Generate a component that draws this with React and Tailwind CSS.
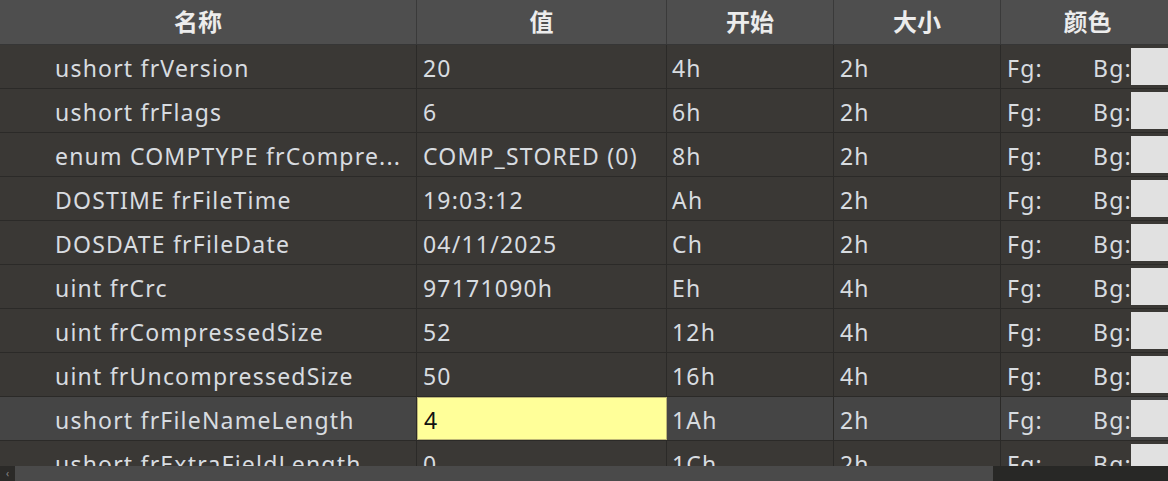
import React from "react";

const rows = [
  ["ushort frVersion", "20", "4h", "2h"],
  ["ushort frFlags", "6", "6h", "2h"],
  ["enum COMPTYPE frCompre...", "COMP_STORED (0)", "8h", "2h"],
  ["DOSTIME frFileTime", "19:03:12", "Ah", "2h"],
  ["DOSDATE frFileDate", "04/11/2025", "Ch", "2h"],
  ["uint frCrc", "97171090h", "Eh", "4h"],
  ["uint frCompressedSize", "52", "12h", "4h"],
  ["uint frUncompressedSize", "50", "16h", "4h"],
  ["ushort frFileNameLength", "4", "1Ah", "2h", true],
  ["ushort frExtraFieldLength", "0", "1Ch", "2h"],
];

const font = { fontFamily: '"Noto Sans", "Noto Sans CJK SC", sans-serif' };

export default function App() {
  return (
    <div className="w-[1168px] h-[481px] overflow-hidden bg-[#3a3835] flex flex-col text-[#d8dce0]" style={font}>
      <div className="h-[466px] overflow-hidden flex flex-col">
        <div className="grid grid-cols-[417px_250px_167px_167px_167px] h-[45px] shrink-0 bg-[#4e4e4e] border-b border-[#363636] text-[24px] font-semibold text-[#ececec]">
          <div className="flex items-center justify-center pr-[20px] border-r border-[#3a3a3a]">名称</div>
          <div className="flex items-center justify-center border-r border-[#3a3a3a]">值</div>
          <div className="flex items-center justify-center border-r border-[#3a3a3a]">开始</div>
          <div className="flex items-center justify-center border-r border-[#3a3a3a]">大小</div>
          <div className="flex items-center justify-center pl-[6px]">颜色</div>
        </div>
        {rows.map((r, i) => (
          <div
            key={i}
            className={`grid grid-cols-[417px_250px_167px_167px_167px] h-[44px] shrink-0 border-b border-[#2b2a28] text-[23px] tracking-[1.2px] ${r[4] ? "bg-[#454545]" : "bg-[#3a3835]"}`}
          >
            <div className="flex items-center pl-[55px] pt-[3px] border-r border-[#2b2a28] whitespace-nowrap overflow-hidden">{r[0]}</div>
            <div className={`flex items-center pl-[6px] pt-[3px] border-r border-[#2b2a28] whitespace-nowrap ${r[4] ? "bg-[#ffff99] text-[#111] border border-[#bdb676]" : ""}`}>{r[1]}</div>
            <div className="flex items-center pl-[5px] pt-[3px] border-r border-[#2b2a28]">{r[2]}</div>
            <div className="flex items-center pl-[6px] pt-[3px] border-r border-[#2b2a28]">{r[3]}</div>
            <div className="flex items-center pl-[6px] pt-[3px] relative">
              <span className="w-[86px]">Fg:</span>
              <span>Bg:</span>
              <div className="absolute left-[130px] top-[3px] bottom-[3px] w-[40px] bg-[#e1e1e1]" />
            </div>
          </div>
        ))}
      </div>
      <div className="h-[15px] shrink-0 flex bg-[#282826]">
        <div className="w-[15px] bg-[#2b2a28] flex items-center justify-center text-[10px] text-[#888]">‹</div>
        <div className="w-[978px] bg-[#4a4a4a]" />
      </div>
    </div>
  );
}
